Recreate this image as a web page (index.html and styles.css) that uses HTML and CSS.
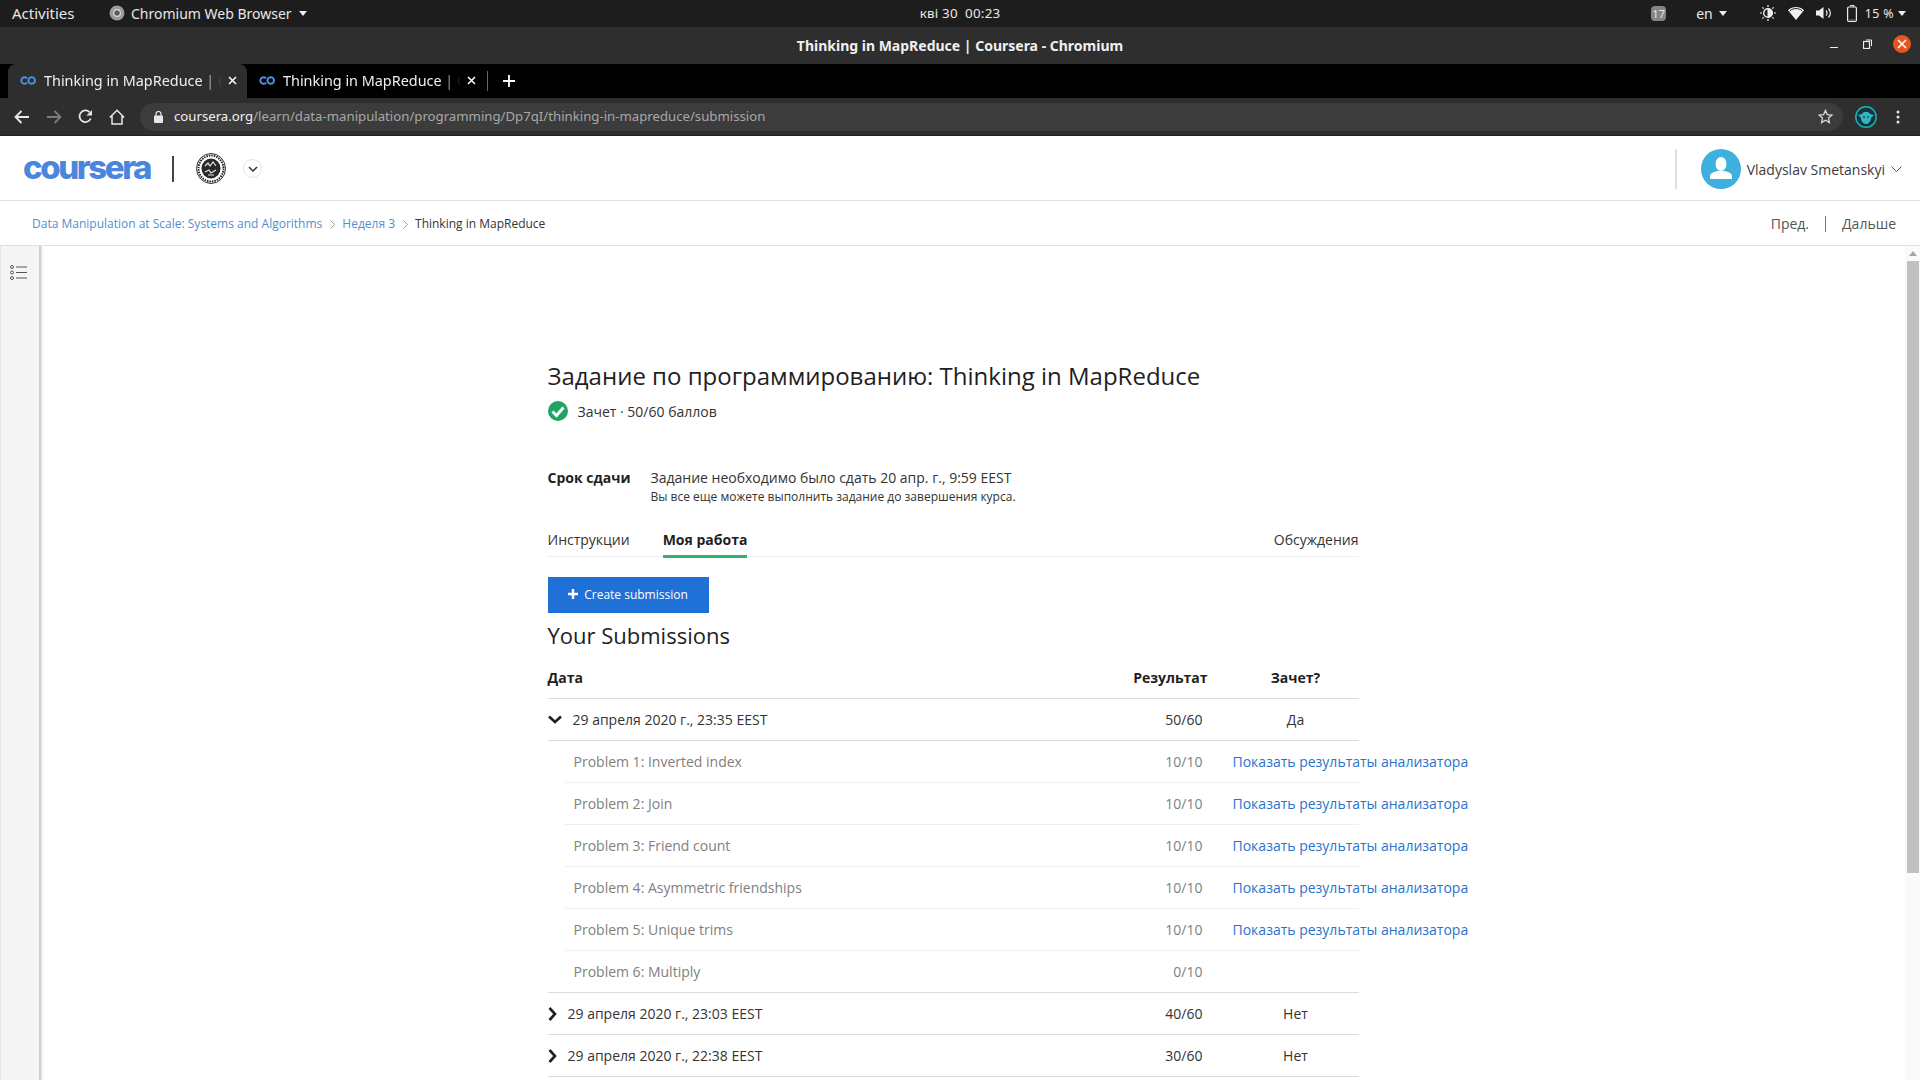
FILE: index.html
```html
<!DOCTYPE html>
<html lang="ru">
<head>
<meta charset="utf-8">
<title>Thinking in MapReduce | Coursera - Chromium</title>
<link rel="stylesheet" href="styles.css">
</head>
<body>
<div class="topbar">
  <div class="tb-left">
    <span class="activities">Activities</span>
    <span class="appmenu">
      <svg class="app-ico" width="16" height="16" viewBox="0 0 16 16"><circle cx="8" cy="8" r="7.5" fill="#9a9a9a"/><circle cx="8" cy="8" r="3.4" fill="#5c5c5c" stroke="#ddd" stroke-width="1.2"/></svg>
      <span>Chromium Web Browser</span><i class="tri"></i>
    </span>
  </div>
  <div class="clock">кві 30&nbsp;&nbsp;00:23</div>
  <div class="tb-right">
    <span class="badge">17</span>
    <span class="lang">en<i class="tri"></i></span>
    <svg class="sun" width="16" height="18" viewBox="0 0 16 18" fill="none" stroke="#eee"><circle cx="8" cy="9" r="4.3" stroke-width="1.4"/><path d="M8 9V4.7A4.3 4.3 0 0 1 8 13.300z" fill="#eee"/><path d="M8 1v2M8 15v2M0 9h2M14 9h2M2.300 3.300l1.400 1.400M12.300 13.300l1.400 1.400M2.300 14.700l1.400-1.400M12.300 4.700l1.400-1.400" stroke-width="1.200"/></svg>
    <svg class="wifi" width="16" height="14" viewBox="0 0 16 14"><path d="M0 4.200C4.500 0 11.500 0 16 4.200L8 14z" fill="#f2f2f2"/><path d="M1.800 4.800C5.500 1.800 10.500 1.800 14.200 4.800" fill="none" stroke="#1d1d1d" stroke-width="1"/></svg>
    <svg class="vol" width="16" height="14" viewBox="0 0 16 14" fill="none"><path d="M0 4.500h3L7.500 1v12L3 9.500H0z" fill="#eee"/><path d="M10 4.500a3.500 3.500 0 0 1 0 5M12.500 2.500a6.500 6.500 0 0 1 0 9" stroke="#eee" stroke-width="1.200"/></svg>
    <svg class="batt" width="10" height="17" viewBox="0 0 10 17" fill="none"><path d="M3 .5h4v1.500" stroke="#eee"/><rect x=".6" y="2" width="8.800" height="14.400" rx="1.200" stroke="#eee" stroke-width="1.200"/><path d="M2 14.500h6" stroke="#d01818" stroke-width="1"/></svg>
    <span class="pct">15 %<i class="tri"></i></span>
  </div>
</div>

<div class="titlebar">
  <span class="wintitle">Thinking in MapReduce | Coursera - Chromium</span>
  <div class="winbtns">
    <i class="win-min"></i>
    <svg class="win-max" width="9" height="10" viewBox="0 0 9 10" fill="none" stroke="#eee"><rect x=".5" y="2.500" width="6" height="7" stroke-width="1.200"/><path d="M3 1h5.500v6"/></svg>
    <span class="win-close"><svg width="10" height="10" viewBox="0 0 10 10"><path d="M1 1l8 8M9 1l-8 8" stroke="#fff" stroke-width="1.600"/></svg></span>
  </div>
</div>

<div class="tabstrip">
  <div class="tab tab-active">
    <svg class="fav" width="16" height="9" viewBox="0 0 16 9" fill="none" stroke="#4a90dc" stroke-width="2"><path d="M7 2.200a3.300 3.300 0 1 0 0 4.600"/><circle cx="11.700" cy="4.500" r="3.300"/></svg>
    <span class="tab-title">Thinking in MapReduce | C</span>
    <svg class="tab-x" width="9" height="9" viewBox="0 0 9 9"><path d="M1 1l7 7M8 1L1 8" stroke="#fff" stroke-width="1.500"/></svg>
  </div>
  <div class="tab">
    <svg class="fav" width="16" height="9" viewBox="0 0 16 9" fill="none" stroke="#4a90dc" stroke-width="2"><path d="M7 2.200a3.300 3.300 0 1 0 0 4.600"/><circle cx="11.700" cy="4.500" r="3.300"/></svg>
    <span class="tab-title">Thinking in MapReduce | C</span>
    <svg class="tab-x" width="9" height="9" viewBox="0 0 9 9"><path d="M1 1l7 7M8 1L1 8" stroke="#fff" stroke-width="1.500"/></svg>
  </div>
  <i class="tab-sep"></i>
  <svg class="tab-plus" width="12" height="12" viewBox="0 0 12 12"><path d="M6 0v12M0 6h12" stroke="#fff" stroke-width="1.800"/></svg>
</div>

<div class="toolbar">
  <div class="navbtns">
    <svg width="16" height="14" viewBox="0 0 16 14" fill="none" stroke="#e8e8e8" stroke-width="1.800"><path d="M15 7H2M7.500 1L1.500 7l6 6"/></svg>
    <svg width="16" height="14" viewBox="0 0 16 14" fill="none" stroke="#7c7c7c" stroke-width="1.800"><path d="M1 7h13M8.500 1l6 6-6 6"/></svg>
    <svg width="15" height="15" viewBox="0 0 15 15" fill="none" stroke="#e8e8e8" stroke-width="1.800"><path d="M12.700 9.500A5.800 5.800 0 1 1 11.500 3.200"/><path d="M14 1v5.500H8.500z" fill="#e8e8e8" stroke="none"/></svg>
    <svg width="16" height="16" viewBox="0 0 16 16" fill="none" stroke="#e8e8e8" stroke-width="1.500"><path d="M.8 8.500L8 1.200l7.200 7.300M3 7v8h10V7"/></svg>
  </div>
  <div class="omnibox">
    <svg class="lock" width="9" height="12" viewBox="0 0 9 12" fill="#e8e8e8"><rect y="4.500" width="9" height="7.500" rx="1"/><path d="M2 5V3a2.500 2.500 0 0 1 5 0v2" fill="none" stroke="#e8e8e8" stroke-width="1.200"/></svg>
    <span class="url"><b>coursera.org</b>/learn/data-manipulation/programming/Dp7qI/thinking-in-mapreduce/submission</span>
    <svg class="star" width="15" height="15" viewBox="0 0 16 16" fill="none" stroke="#d6d6d6" stroke-width="1.400"><path d="M8 1.500l2 4.500 4.800.5-3.600 3.200 1 4.800L8 12l-4.200 2.500 1-4.800L1.200 6.500 6 6z"/></svg>
  </div>
  <svg class="ext" width="22" height="22" viewBox="0 0 22 22"><circle cx="11" cy="11" r="10.200" fill="#16323a" stroke="#13b5bd" stroke-width="1.500"/><path d="M3 9l4-1c1-3 7-3 8 0l4 1-3 3c0 4-3 6-5 6s-5-2-5-6z" fill="#35b4c0"/><circle cx="9" cy="11" r="1" fill="#13525c"/><circle cx="13" cy="11" r="1" fill="#13525c"/></svg>
  <svg class="menu" width="4" height="14" viewBox="0 0 4 14" fill="#e8e8e8"><circle cx="2" cy="2" r="1.500"/><circle cx="2" cy="7" r="1.500"/><circle cx="2" cy="12" r="1.500"/></svg>
</div>

<header class="pagehead">
  <span class="logo">coursera</span>
  <i class="logo-sep"></i>
  <svg class="seal" width="30" height="31" viewBox="0 0 30 31"><ellipse cx="15" cy="15.500" rx="14.500" ry="15" fill="#fff" stroke="#333"/><ellipse cx="15" cy="15.500" rx="12.500" ry="13" fill="none" stroke="#222" stroke-width="2" stroke-dasharray="1.500 1"/><ellipse cx="15" cy="15.500" rx="9.500" ry="10" fill="#2a2a2a"/><path d="M9 13l3-3 2 3 3-4 3 4M9 19l4-2 2 3 5-3M12 22h6" stroke="#e6e6e6" stroke-width="1.200" fill="none"/></svg>
  <span class="org-btn"><svg width="10" height="6" viewBox="0 0 10 6" fill="none" stroke="#333" stroke-width="1.500"><path d="M1 1l4 4 4-4"/></svg></span>
  <div class="user">
    <i class="user-sep"></i>
    <svg class="avatar" width="40" height="40" viewBox="0 0 40 40"><circle cx="20" cy="20" r="20" fill="#3eb0dd"/><ellipse cx="20" cy="15" rx="5.500" ry="7" fill="#fff"/><path d="M9 30v-3c0-3 5-4.500 8-5h6c3 .5 8 2 8 5v3z" fill="#fff"/></svg>
    <span class="username">Vladyslav Smetanskyi</span>
    <svg class="user-chev" width="11" height="6" viewBox="0 0 11 6" fill="none" stroke="#555"><path d="M.5.500l5 5 5-5"/></svg>
  </div>
</header>

<nav class="crumbs">
  <a class="crumb">Data Manipulation at Scale: Systems and Algorithms</a>
  <svg class="crumb-chev" width="5" height="9" viewBox="0 0 5 9" fill="none" stroke="#999"><path d="M.5.500l4 4-4 4"/></svg>
  <a class="crumb">Неделя 3</a>
  <svg class="crumb-chev" width="5" height="9" viewBox="0 0 5 9" fill="none" stroke="#999"><path d="M.5.500l4 4-4 4"/></svg>
  <span class="crumb-cur">Thinking in MapReduce</span>
  <div class="prevnext"><span>Пред.</span><i></i><span>Дальше</span></div>
</nav>

<div class="body">
  <aside class="sidebar">
    <svg width="17" height="15" viewBox="0 0 17 15" fill="none" stroke="#555"><circle cx="2" cy="2" r="1.500"/><circle cx="2" cy="7.500" r="1.500"/><circle cx="2" cy="13" r="1.500"/><path d="M6 2h11M6 7.500h11M6 13h11"/></svg>
  </aside>
  <main class="main">
    <div class="content">
      <h1 class="title">Задание по программированию: Thinking in MapReduce</h1>
      <div class="status">
        <svg width="20" height="20" viewBox="0 0 20 20"><circle cx="10" cy="10" r="10" fill="#1fa463"/><path d="M4.500 10.500l4 4L15.500 6.500" fill="none" stroke="#fff" stroke-width="3"/></svg>
        <span>Зачет · 50/60 баллов</span>
      </div>
      <div class="deadline">
        <b>Срок сдачи</b>
        <div>
          <div class="dl-main">Задание необходимо было сдать 20 апр. г., 9:59 EEST</div>
          <div class="dl-sub">Вы все еще можете выполнить задание до завершения курса.</div>
        </div>
      </div>
      <div class="tabs">
        <span class="ctab">Инструкции</span>
        <span class="ctab ctab-on">Моя работа</span>
        <span class="ctab ctab-end">Обсуждения</span>
      </div>
      <button class="create"><svg width="10" height="10" viewBox="0 0 10 10"><path d="M5 0v10M0 5h10" stroke="#fff" stroke-width="2.400"/></svg>Create submission</button>
      <h2 class="subs">Your Submissions</h2>
      <div class="table">
        <div class="row head"><span>Дата</span><span class="num head-score">Результат</span><span class="ctr">Зачет?</span></div>
        <div class="row main-row"><span class="date date-open"><svg width="14" height="9" viewBox="0 0 14 9" fill="none" stroke="#1f1f1f" stroke-width="2.600"><path d="M1 1.500l6 5.500 6-5.500"/></svg>29 апреля 2020 г., 23:35 EEST</span><span class="num">50/60</span><span class="ctr">Да</span></div>
        <div class="row sub-row"><span>Problem 1: Inverted index</span><span class="num">10/10</span><a class="report">Показать результаты анализатора</a></div>
        <div class="row sub-row"><span>Problem 2: Join</span><span class="num">10/10</span><a class="report">Показать результаты анализатора</a></div>
        <div class="row sub-row"><span>Problem 3: Friend count</span><span class="num">10/10</span><a class="report">Показать результаты анализатора</a></div>
        <div class="row sub-row"><span>Problem 4: Asymmetric friendships</span><span class="num">10/10</span><a class="report">Показать результаты анализатора</a></div>
        <div class="row sub-row"><span>Problem 5: Unique trims</span><span class="num">10/10</span><a class="report">Показать результаты анализатора</a></div>
        <div class="row sub-row sub-last"><span>Problem 6: Multiply</span><span class="num">0/10</span><span></span></div>
        <div class="row main-row"><span class="date"><svg width="9" height="14" viewBox="0 0 9 14" fill="none" stroke="#1f1f1f" stroke-width="2.600"><path d="M1.500 1l5.500 6-5.500 6"/></svg>29 апреля 2020 г., 23:03 EEST</span><span class="num">40/60</span><span class="ctr">Нет</span></div>
        <div class="row main-row"><span class="date"><svg width="9" height="14" viewBox="0 0 9 14" fill="none" stroke="#1f1f1f" stroke-width="2.600"><path d="M1.500 1l5.500 6-5.500 6"/></svg>29 апреля 2020 г., 22:38 EEST</span><span class="num">30/60</span><span class="ctr">Нет</span></div>
      </div>
    </div>
  </main>
  <div class="scrollbar"><i class="sb-up"></i><i class="sb-thumb"></i></div>
</div>
</body>
</html>
```
FILE: styles.css
```css
* { box-sizing: border-box; }
html, body { margin: 0; height: 1080px; overflow: hidden; background: #fff; }
body { font-family: "Open Sans", "Noto Sans", sans-serif; font-size: 14px; color: #1f1f1f; }
i { display: block; }
a { color: inherit; text-decoration: none; }
svg { display: block; flex: none; }

/* GNOME top bar */
.topbar { height: 27px; background: #1d1d1d; color: #e8e8e8; font-family: "Noto Sans", sans-serif; font-size: 14px; display: grid; grid-template-columns: 1fr auto 1fr; align-items: center; padding: 0 12px 1px; }
.tb-left { display: flex; align-items: center; }
.activities { width: 97px; font-size: 15px; }
.appmenu { display: flex; align-items: center; }
.app-ico { margin: 0 6px 0 0; }
.tri { width: 0; height: 0; border-left: 4.5px solid transparent; border-right: 4.5px solid transparent; border-top: 5px solid #eee; margin-left: 7px; }
.clock { font-size: 13.4px; letter-spacing: .2px; }
.tb-right { display: flex; align-items: center; justify-content: flex-end; padding-right: 2px; }
.badge { width: 15px; height: 15px; border-radius: 4px; background: #858585; font-size: 11px; line-height: 15px; text-align: center; margin-right: 30px; }
.lang { display: flex; align-items: center; font-size: 14px; margin-right: 33px; }
.lang .tri { margin-left: 6px; }
.sun { margin-right: 12px; }
.wifi { margin-right: 12px; }
.vol { margin-right: 15px; }
.batt { margin-right: 8px; }
.pct { display: flex; align-items: center; font-size: 12.4px; letter-spacing: .4px; }
.pct .tri { margin-left: 4px; }

/* Title bar */
.titlebar { height: 37px; background: #2e2e2e; position: relative; display: flex; align-items: center; justify-content: center; color: #f0f0f0; font-family: "Noto Sans", sans-serif; font-size: 14px; font-weight: 700; }
.winbtns { position: absolute; right: 9px; top: 8px; display: flex; align-items: center; }
.win-min { width: 8px; height: 1.500px; background: #eee; margin: 7px 25px 0 0; }
.win-max { margin-right: 21px; }
.win-close { width: 18px; height: 18px; border-radius: 50%; background: #e95420; display: flex; align-items: center; justify-content: center; }

/* Tab strip */
.tabstrip { height: 34px; background: #000; display: flex; align-items: center; padding-left: 8px; color: #f0f0f0; font-family: "Noto Sans", sans-serif; font-size: 14.4px; }
.tab { width: 239px; height: 34px; display: flex; align-items: center; padding: 0 10px 2px 12px; border-radius: 8px 8px 0 0; }
.tab-active { background: #2e2e2e; }
.fav { margin-right: 8px; }
.tab-title { white-space: nowrap; -webkit-mask-image: linear-gradient(to right, #000 158px, transparent 178px); mask-image: linear-gradient(to right, #000 158px, transparent 178px); }
.tab-x { margin-left: auto; }
.tab-sep { width: 1px; height: 20px; background: #666; margin-left: 1px; }
.tab-plus { margin-left: 15px; }

/* Toolbar */
.toolbar { height: 38px; background: #2e2e2e; display: flex; align-items: center; padding: 0 18px 0 14px; border-bottom: 1px solid #222; }
.navbtns { display: flex; align-items: center; gap: 16px; width: 126px; }
.omnibox { width: 1703px; height: 28px; border-radius: 14px; background: #3c3c3c; display: flex; align-items: center; padding-left: 14px; color: #a8a8a8; font-family: "Noto Sans", sans-serif; font-size: 13.2px; }
.lock { margin-right: 11px; }
.url { margin-top: -2px; }
.url b { font-weight: 400; color: #f0f0f0; }
.star { margin-left: auto; margin-right: 10px; }
.ext { margin-left: 12px; }
.menu { margin-left: 19px; }

/* Coursera header */
.pagehead { height: 65px; padding-top: 1px; border-bottom: 1px solid #e2e2e2; display: flex; align-items: center; padding-left: 23px; }
.logo { width: 128px; padding-bottom: 2px; color: #4a86dc; font-family: Inter, "Noto Sans", sans-serif; font-weight: 800; font-size: 33px; letter-spacing: -2.4px; line-height: 1; white-space: nowrap; }
.logo-sep { width: 2px; height: 26px; background: #444; margin: 0 22px 0 21px; }
.org-btn { width: 19px; height: 19px; border: 1px solid #e4e4e4; border-radius: 50%; display: flex; align-items: center; justify-content: center; margin-left: 17px; }
.user { margin-left: auto; display: flex; align-items: center; padding: 1px 18px 0 0; }
.user-sep { width: 2px; height: 40px; background: #e0e0e0; margin-right: 24px; }
.username { margin: 0 6px; color: #3c3c3c; }
.user-chev { margin-left: 0; }

/* Breadcrumbs */
.crumbs { height: 45px; padding-top: 1px; border-bottom: 1px solid #e2e2e2; display: flex; align-items: center; padding-left: 32px; padding-right: 24px; font-size: 12px; }
.crumb { color: #4f8fd1; }
.crumb-chev { margin: 2px 7px 0 8px; }
.crumb-cur { color: #333; }
.prevnext { margin-left: auto; display: flex; align-items: center; color: #555; font-size: 14px; }
.prevnext i { width: 1px; height: 16px; background: #777; margin: 0 16px; }

/* Body */
.body { display: flex; height: 834px; }
.sidebar { width: 41px; background: #f5f5f5; border-left: 1px solid #e4e4e4; border-right: 2px solid #cfcfcf; box-shadow: 1px 0 2px #ddd; padding: 19px 0 0 9px; }
.main { flex: 1; min-width: 0; }
.content { width: 811px; margin-left: 506.5px; padding-top: 115px; }
.title { margin: 0; font-size: 24px; font-weight: 400; line-height: 30px; }
.status { display: flex; align-items: center; margin-top: 8px; height: 24px; color: #333; }
.status span { margin-left: 10px; }
.deadline { display: flex; margin-top: 45px; }
.deadline b { width: 103px; line-height: 20px; }
.dl-main { line-height: 20px; color: #333; }
.dl-sub { font-size: 12px; line-height: 18px; color: #333; }
.tabs { display: flex; margin-top: 22px; height: 29px; border-bottom: 1px solid #eee; }
.ctab { height: 30px; line-height: 24px; color: #333; margin-right: 33px; }
.ctab-on { font-weight: 700; color: #1f1f1f; border-bottom: 3px solid #2bb673; }
.ctab-end { margin: 0 0 0 auto; }
.create { display: flex; align-items: center; justify-content: center; gap: 6px; width: 161px; height: 36px; margin-top: 20px; border: 0; background: #1f71d8; color: #fff; font-family: inherit; font-size: 12px; padding: 0 0 2px; }
.subs { margin: 7px 0 0; font-size: 22px; font-weight: 400; line-height: 30px; }

/* Table */
.table { margin-top: 7px; }
.row { display: grid; grid-template-columns: 1fr 100px 126px; column-gap: 30px; height: 42px; align-items: center; border-bottom: 1px solid #dcdcdc; white-space: nowrap; }
.head { font-weight: 700; height: 42px; }
.num { text-align: right; color: #333; }
.head-score { margin-right: -5px; color: #1f1f1f; }
.ctr { text-align: center; }
.date { display: flex; align-items: center; gap: 11px; color: #333; }
.date-open { gap: 11px; }
.main-row .ctr { color: #333; }
.sub-row { margin-left: 17px; grid-template-columns: 1fr 100px 126px; padding-left: 9px; border-color: #eee; color: #808080; }
.sub-row .num { color: #808080; }
.sub-last { margin-left: 0; padding-left: 26px; border-color: #dcdcdc; }
.report { color: #2a73cc; }

/* Scrollbar */
.scrollbar { width: 15px; background: #fafafa; display: flex; flex-direction: column; align-items: center; padding-top: 5px; }
.sb-up { width: 0; height: 0; border-left: 4px solid transparent; border-right: 4px solid transparent; border-bottom: 5px solid #a3a3a3; }
.sb-thumb { width: 12px; height: 612px; background: #c1c1c1; margin-top: 5px; }
```
